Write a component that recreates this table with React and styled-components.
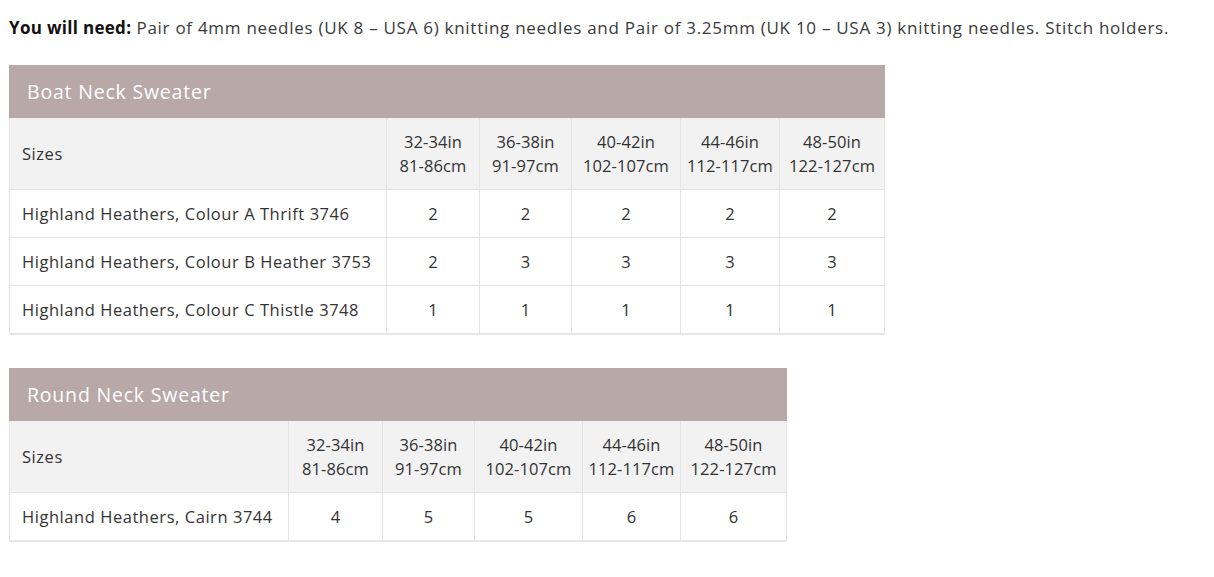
import React from "react";
import styled, { createGlobalStyle } from "styled-components";

const Global = createGlobalStyle`
  html, body { margin: 0; padding: 0; background: #ffffff; }
  body { font-family: "Open Sans", "Noto Sans", sans-serif; color: #333333; }
`;

const Page = styled.div`
  padding: 16px 9px 0 9px;
  display: flex;
  flex-direction: column;
  align-items: flex-start;
`;

const Intro = styled.p`
  margin: 0 0 25px 0;
  font-size: 17px;
  letter-spacing: 0.72px;
  line-height: 24px;
  color: #3a3a3a;
  white-space: nowrap;
  & strong { color: #111; font-weight: 700; letter-spacing: 0.3px; }
`;

const Stack = styled.div`
  display: flex;
  flex-direction: column;
  gap: 33px;
`;

const Table = styled.table`
  border-collapse: collapse;
  table-layout: fixed;
  width: ${(p) => p.$width}px;
  font-size: 16.5px;
  color: #333;
  border-bottom: 2px solid #e6e6e6;
`;

const HeadCell = styled.th`
  background: #b8a8a8;
  color: #ffffff;
  font-weight: 400;
  font-size: 19.5px;
  letter-spacing: 0.8px;
  text-align: left;
  padding: 12px 17px;
  line-height: 27px;
  border: 1px solid #b8a8a8;
`;

const Row = styled.tr`
  background: ${(p) => (p.$shade ? "#f2f2f2" : "#ffffff")};
`;

const Cell = styled.td`
  border: 1px solid #e3e3e3;
  padding: 12px ${(p) => (p.$label ? "12px" : "2px")} 11px;
  line-height: 24px;
  letter-spacing: ${(p) => (p.$label ? "0.55px" : "0.1px")};
  text-align: ${(p) => (p.$label ? "left" : "center")};
  white-space: nowrap;
`;

const sizes = [
  ["32-34in", "81-86cm"],
  ["36-38in", "91-97cm"],
  ["40-42in", "102-107cm"],
  ["44-46in", "112-117cm"],
  ["48-50in", "122-127cm"],
];

function SizeTable({ title, cols, rows }) {
  const width = cols.reduce((a, b) => a + b, 0);
  return (
    <Table $width={width}>
      <colgroup>
        {cols.map((w, i) => (
          <col key={i} style={{ width: w }} />
        ))}
      </colgroup>
      <thead>
        <tr>
          <HeadCell colSpan={6}>{title}</HeadCell>
        </tr>
      </thead>
      <tbody>
        <Row $shade>
          <Cell $label>Sizes</Cell>
          {sizes.map(([a, b]) => (
            <Cell key={a}>
              {a}
              <br />
              {b}
            </Cell>
          ))}
        </Row>
        {rows.map(([label, vals]) => (
          <Row key={label}>
            <Cell $label>{label}</Cell>
            {vals.map((v, i) => (
              <Cell key={i}>{v}</Cell>
            ))}
          </Row>
        ))}
      </tbody>
    </Table>
  );
}

export default function App() {
  return (
    <>
      <Global />
      <Page>
        <Intro>
          <strong>You will need:</strong> Pair of 4mm needles (UK 8 – USA 6) knitting needles and Pair of 3.25mm (UK 10 – USA 3) knitting needles. Stitch holders.
        </Intro>
        <Stack>
          <SizeTable
            title="Boat Neck Sweater"
            cols={[377, 93, 92, 109, 99, 105]}
            rows={[
              ["Highland Heathers, Colour A Thrift 3746", [2, 2, 2, 2, 2]],
              ["Highland Heathers, Colour B Heather 3753", [2, 3, 3, 3, 3]],
              ["Highland Heathers, Colour C Thistle 3748", [1, 1, 1, 1, 1]],
            ]}
          />
          <SizeTable
            title="Round Neck Sweater"
            cols={[279, 94, 92, 108, 98, 106]}
            rows={[["Highland Heathers, Cairn 3744", [4, 5, 5, 6, 6]]]}
          />
        </Stack>
      </Page>
    </>
  );
}
